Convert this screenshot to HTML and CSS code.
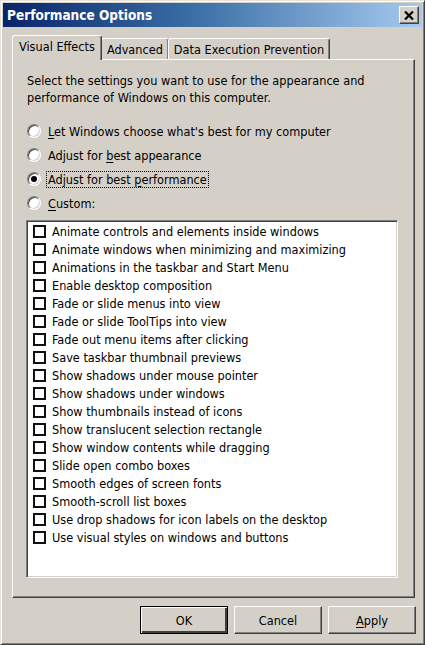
FILE: index.html
```html
<!DOCTYPE html>
<html>
<head>
<meta charset="utf-8">
<link rel="stylesheet" href="styles.css">
</head>
<body>
<div class="window">
  <div class="titlebar">
    <span class="title">Performance Options</span>
    <span class="close"><svg width="10" height="9" viewBox="0 0 10 9"><path d="M1 0.5 L9 8.5 M9 0.5 L1 8.5" stroke="#000" stroke-width="2.2" fill="none"/></svg></span>
  </div>
  <div class="body">
    <div class="tabs">
      <div class="tab active">Visual Effects</div>
      <div class="tab">Advanced</div>
      <div class="tab">Data Execution Prevention</div>
    </div>
    <div class="panel">
      <p class="desc">Select the settings you want to use for the appearance and performance of Windows on this computer.</p>
      <div class="radios">
        <div class="radio-row"><span class="radio"></span><span class="rlabel"><u>L</u>et Windows choose what's best for my computer</span></div>
        <div class="radio-row"><span class="radio"></span><span class="rlabel">Adjust for <u>b</u>est appearance</span></div>
        <div class="radio-row"><span class="radio checked"></span><span class="rlabel focus">Adjust for best <u>p</u>erformance</span></div>
        <div class="radio-row"><span class="radio"></span><span class="rlabel"><u>C</u>ustom:</span></div>
      </div>
      <div class="listbox">
        <div class="item"><span class="check"></span>Animate controls and elements inside windows</div>
        <div class="item"><span class="check"></span>Animate windows when minimizing and maximizing</div>
        <div class="item"><span class="check"></span>Animations in the taskbar and Start Menu</div>
        <div class="item"><span class="check"></span>Enable desktop composition</div>
        <div class="item"><span class="check"></span>Fade or slide menus into view</div>
        <div class="item"><span class="check"></span>Fade or slide ToolTips into view</div>
        <div class="item"><span class="check"></span>Fade out menu items after clicking</div>
        <div class="item"><span class="check"></span>Save taskbar thumbnail previews</div>
        <div class="item"><span class="check"></span>Show shadows under mouse pointer</div>
        <div class="item"><span class="check"></span>Show shadows under windows</div>
        <div class="item"><span class="check"></span>Show thumbnails instead of icons</div>
        <div class="item"><span class="check"></span>Show translucent selection rectangle</div>
        <div class="item"><span class="check"></span>Show window contents while dragging</div>
        <div class="item"><span class="check"></span>Slide open combo boxes</div>
        <div class="item"><span class="check"></span>Smooth edges of screen fonts</div>
        <div class="item"><span class="check"></span>Smooth-scroll list boxes</div>
        <div class="item"><span class="check"></span>Use drop shadows for icon labels on the desktop</div>
        <div class="item"><span class="check"></span>Use visual styles on windows and buttons</div>
      </div>
    </div>
    <div class="buttons">
      <div class="btn default">OK</div>
      <div class="btn">Cancel</div>
      <div class="btn"><u>A</u>pply</div>
    </div>
  </div>
</div>
</body>
</html>
```

FILE: styles.css
```css
* { box-sizing: border-box; }
html, body { margin: 0; padding: 0; background: #d4d0c8; }
body {
  font-family: "DejaVu Sans Condensed", "DejaVu Sans", sans-serif;
  font-size: 12.6px;
  color: #000;
}
.window {
  width: 425px;
  height: 645px;
  background: #d4d0c8;
  border: 1px solid;
  border-color: #e6e3dc #404040 #404040 #e6e3dc;
  box-shadow: inset 1px 1px #ffffff, inset -1px -1px #808080;
  padding: 2px;
  display: flex;
  flex-direction: column;
}
.titlebar {
  height: 24px;
  background: linear-gradient(to right, #0a246a 0%, #3a6ea5 45%, #a6caf0 100%);
  display: flex;
  align-items: center;
  justify-content: space-between;
  padding: 0 3px 0 4px;
}
.title {
  color: #fff;
  font-weight: bold;
  font-size: 13.5px;
}
.close {
  width: 20px;
  height: 18px;
  background: #d4d0c8;
  border: 1px solid;
  border-color: #ffffff #404040 #404040 #ffffff;
  box-shadow: inset -1px -1px #808080;
  display: flex;
  align-items: center;
  justify-content: center;
}
.body {
  flex: 1;
  display: flex;
  flex-direction: column;
  padding: 8px 7px 0 9px;
}
.tabs {
  display: flex;
  align-items: flex-end;
  height: 24px;
  position: relative;
  z-index: 1;
}
.tab {
  height: 21px;
  padding: 0 5px;
  display: flex;
  align-items: center;
  background: #d4d0c8;
  border-top: 1px solid #fff;
  border-left: 1px solid #fff;
  border-right: 1px solid #404040;
  box-shadow: inset -1px 0 #808080;
  border-radius: 3px 3px 0 0;
}
.tab + .tab { margin-left: -1px; }
.tab.active {
  height: 25px;
  margin-bottom: -1px;
  padding: 0 6px 3px 6px;
  z-index: 2;
  position: relative;
}
.panel {
  height: 539px;
  border: 1px solid;
  border-color: #ffffff #404040 #404040 #ffffff;
  box-shadow: inset -1px -1px #808080;
  padding: 12px 14px 0 14px;
  display: flex;
  flex-direction: column;
}
.desc {
  margin: 0;
  line-height: 17px;
}
.radios {
  margin-top: 13px;
  display: flex;
  flex-direction: column;
}
.radio-row {
  height: 24px;
  display: flex;
  align-items: center;
}
.radio {
  width: 14px;
  height: 14px;
  border-radius: 50%;
  background: #fff;
  border: 1px solid;
  border-color: #808080 #ffffff #ffffff #808080;
  box-shadow: inset 1px 1px #404040, inset -1px -1px #d4d0c8;
  margin-right: 5px;
  display: flex;
  align-items: center;
  justify-content: center;
  flex: none;
}
.radio.checked::after {
  content: "";
  width: 6px;
  height: 6px;
  border-radius: 50%;
  background: #000;
}
.rlabel {
  padding: 0 1px;
  border: 1px dotted transparent;
  line-height: 15px;
}
.rlabel.focus { border-color: #000; }
.listbox {
  margin-top: 5px;
  margin-left: -1px;
  width: 372px;
  height: 358px;
  background: #fff;
  border: 1px solid;
  border-color: #808080 #ffffff #ffffff #808080;
  box-shadow: inset 1px 1px #404040, inset -1px -1px #d4d0c8;
  padding: 1px 2px;
}
.item {
  height: 18px;
  display: flex;
  align-items: center;
  padding-left: 4px;
  white-space: nowrap;
}
.check {
  width: 13px;
  height: 13px;
  border: 2px solid #111;
  margin-right: 6px;
  flex: none;
}
.buttons {
  margin-top: 8px;
  display: flex;
  justify-content: flex-end;
  gap: 6px;
  margin-right: -1px;
}
.btn {
  width: 88px;
  height: 28px;
  display: flex;
  align-items: center;
  justify-content: center;
  border: 1px solid;
  border-color: #ffffff #404040 #404040 #ffffff;
  box-shadow: inset -1px -1px #808080;
}
.btn.default {
  border: 1px solid #000;
  box-shadow: inset 1px 1px #fff, inset -2px -2px #404040;
}
u { text-decoration: underline; text-underline-offset: 2px; }
```
